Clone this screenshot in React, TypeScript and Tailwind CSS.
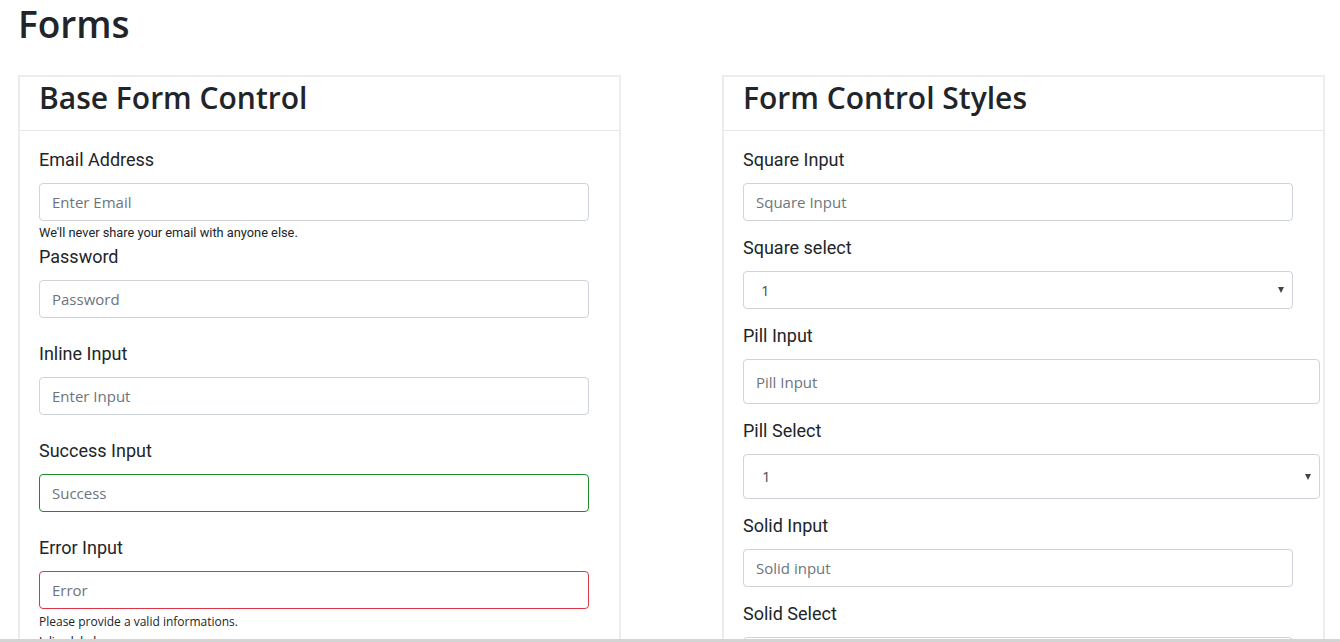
const inputBase =
  "block h-[38px] w-[550px] rounded-[4px] border bg-white px-[12px] font-['Open_Sans'] text-[15px] text-[#495057] outline-none placeholder:text-[#6c757d]";

function Label({ children }: { children: React.ReactNode }) {
  return (
    <label className="mb-[11px] block text-[18px] leading-[24px] text-[#212529]">
      {children}
    </label>
  );
}

function Select({ wide }: { wide?: boolean }) {
  return (
    <div className={wide ? 'relative w-[577px]' : 'relative w-[550px]'}>
      <select
        className={
          wide
            ? "block h-[45px] w-full appearance-none rounded-[4px] border border-[#ced4da] bg-white px-[18px] font-['Open_Sans'] text-[15px] text-[#495057] outline-none"
            : "block h-[38px] w-full appearance-none rounded-[4px] border border-[#ced4da] bg-white px-[17px] font-['Open_Sans'] text-[15px] text-[#495057] outline-none"
        }
      >
        <option>1</option>
        <option>2</option>
        <option>3</option>
      </select>
      <span className="pointer-events-none absolute right-[9px] top-1/2 h-0 w-0 -translate-y-1/2 border-x-[3px] border-t-[6px] border-x-transparent border-t-[#444]"></span>
    </div>
  );
}

function Card({ title, children }: { title: string; children: React.ReactNode }) {
  return (
    <div className="min-h-[700px] border-2 border-[#ececec] bg-white">
      <div className="flex h-[54px] items-center border-b border-[#e6e6e6] pb-[11px] pl-[19px]">
        <h2 className="font-['Open_Sans'] text-[30px] font-semibold leading-none text-[#212529]">
          {title}
        </h2>
      </div>
      <div className="px-[19px] pt-[17px]">{children}</div>
    </div>
  );
}

export default function App() {
  return (
    <div className="min-h-screen bg-white px-[18px] font-['Roboto',sans-serif]">
      <h1 className="font-['Open_Sans'] text-[37px] font-semibold leading-[48px] text-[#212529]">
        Forms
      </h1>

      <div className="mt-[27px] grid grid-cols-[603px_603px] gap-x-[101px]">
        {/* Base form control */}
        <Card title="Base Form Control">
          <div>
            <Label>Email Address</Label>
            <input type="email" placeholder="Enter Email" className={inputBase + ' border-[#ced4da]'} />
            <p className="mt-[4px] text-[12.8px] leading-[16px] text-[#212529]">
              We'll never share your email with anyone else.
            </p>
          </div>
          <div className="mt-[4px]">
            <Label>Password</Label>
            <input type="password" placeholder="Password" className={inputBase + ' border-[#ced4da]'} />
          </div>
          <div className="mt-[24px]">
            <Label>Inline Input</Label>
            <input type="text" placeholder="Enter Input" className={inputBase + ' border-[#ced4da]'} />
          </div>
          <div className="mt-[24px]">
            <Label>Success Input</Label>
            <input type="text" placeholder="Success" className={inputBase + ' border-[#1e8a2e]'} />
          </div>
          <div className="mt-[24px]">
            <Label>Error Input</Label>
            <input type="text" placeholder="Error" className={inputBase + ' border-[#dc3545]'} />
            <p className="mt-[5px] font-['Open_Sans'] text-[12px] leading-[16px] text-[#212529]">
              Please provide a valid informations.
            </p>
          </div>
          <div className="mt-[4px]">
            <p className="text-[12px] leading-[16px] text-[#212529]">Inline label</p>
          </div>
        </Card>

        {/* Form control styles */}
        <Card title="Form Control Styles">
          <div>
            <Label>Square Input</Label>
            <input type="text" placeholder="Square Input" className={inputBase + ' border-[#ced4da]'} />
          </div>
          <div className="mt-[15px]">
            <Label>Square select</Label>
            <Select />
          </div>
          <div className="mt-[15px]">
            <Label>Pill Input</Label>
            <input
              type="text"
              placeholder="Pill Input"
              className="block h-[45px] w-[577px] rounded-[4px] border border-[#ced4da] bg-white px-[12px] font-['Open_Sans'] text-[15px] text-[#495057] outline-none placeholder:text-[#6c757d]"
            />
          </div>
          <div className="mt-[15px]">
            <Label>Pill Select</Label>
            <Select wide />
          </div>
          <div className="mt-[15px]">
            <Label>Solid Input</Label>
            <input type="text" placeholder="Solid input" className={inputBase + ' border-[#ced4da]'} />
          </div>
          <div className="mt-[15px]">
            <Label>Solid Select</Label>
            <Select />
          </div>
        </Card>
      </div>

      <div className="fixed bottom-0 left-0 right-0 h-[3px] bg-[#d4d4d4]"></div>
    </div>
  );
}
